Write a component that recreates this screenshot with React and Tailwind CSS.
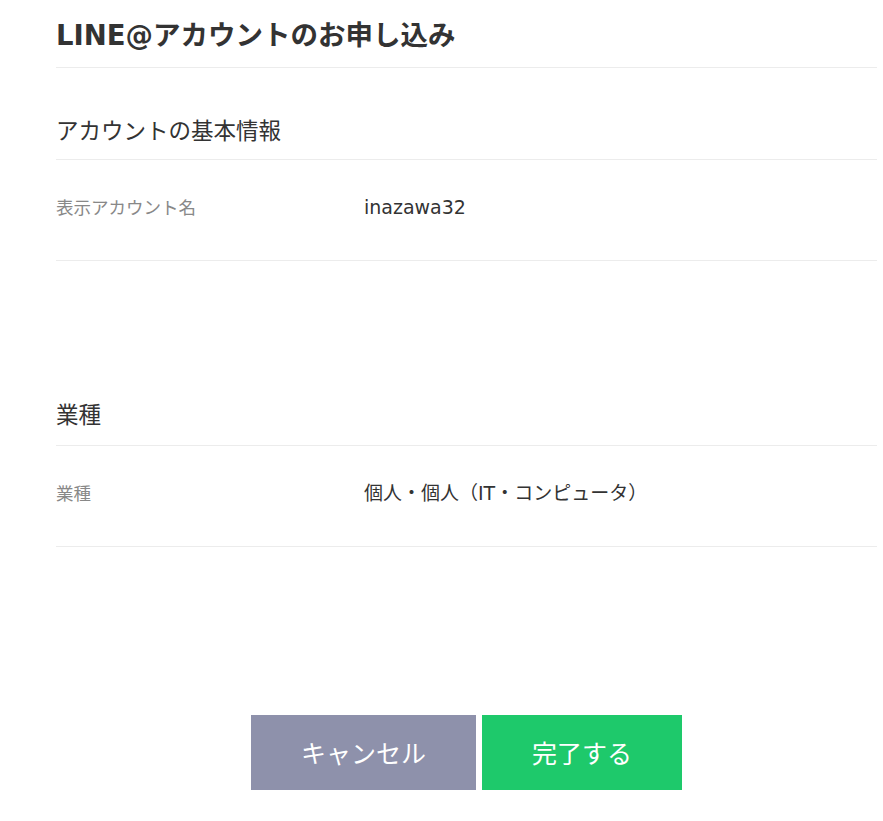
import React from 'react';

const cjk = { fontFamily: '"Noto Sans CJK JP", "Noto Sans", sans-serif' };
const mixed = { fontFamily: '"DejaVu Sans", "Noto Sans CJK JP", sans-serif' };

const Row = ({ label, value }) => (
    <div className="flex border-b border-[#ececec] pt-[31px] pb-[37px]">
        <div className="w-[308px] shrink-0 text-[17.5px] leading-[32px] text-[#888]">{label}</div>
        <div className="text-[19px] leading-[32px] text-[#333]" style={mixed}>{value}</div>
    </div>
);

const App = () => {
    return (
        <div className="min-h-screen bg-white" style={cjk}>
            <div className="ml-[56px] w-[821px]">
                {/* タイトル */}
                <h1 className="border-b border-[#ececec] pt-[15px] pb-[12px] text-[27.5px] font-bold leading-[40px] text-[#333]" style={mixed}>
                    LINE@アカウントのお申し込み
                </h1>

                {/* アカウントの基本情報 */}
                <section>
                    <h2 className="border-b border-[#ececec] pt-[45px] pb-[14px] text-[22.5px] leading-[32px] text-[#333]">
                        アカウントの基本情報
                    </h2>
                    <Row label="表示アカウント名" value="inazawa32" />
                </section>

                {/* 業種 */}
                <section className="mt-[91px]">
                    <h2 className="border-b border-[#ececec] pt-[45px] pb-[16px] text-[22.5px] leading-[32px] text-[#333]">
                        業種
                    </h2>
                    <Row label="業種" value="個人・個人（IT・コンピュータ）" />
                </section>

                <div className="mt-[168px] flex justify-center gap-[6px]">
                    <button className="h-[75px] w-[225px] bg-[#8e91ab] text-[25px] text-white">キャンセル</button>
                    <button className="h-[75px] w-[200px] bg-[#1ec96b] text-[25px] text-white">完了する</button>
                </div>
            </div>
        </div>
    );
};

export default App;
